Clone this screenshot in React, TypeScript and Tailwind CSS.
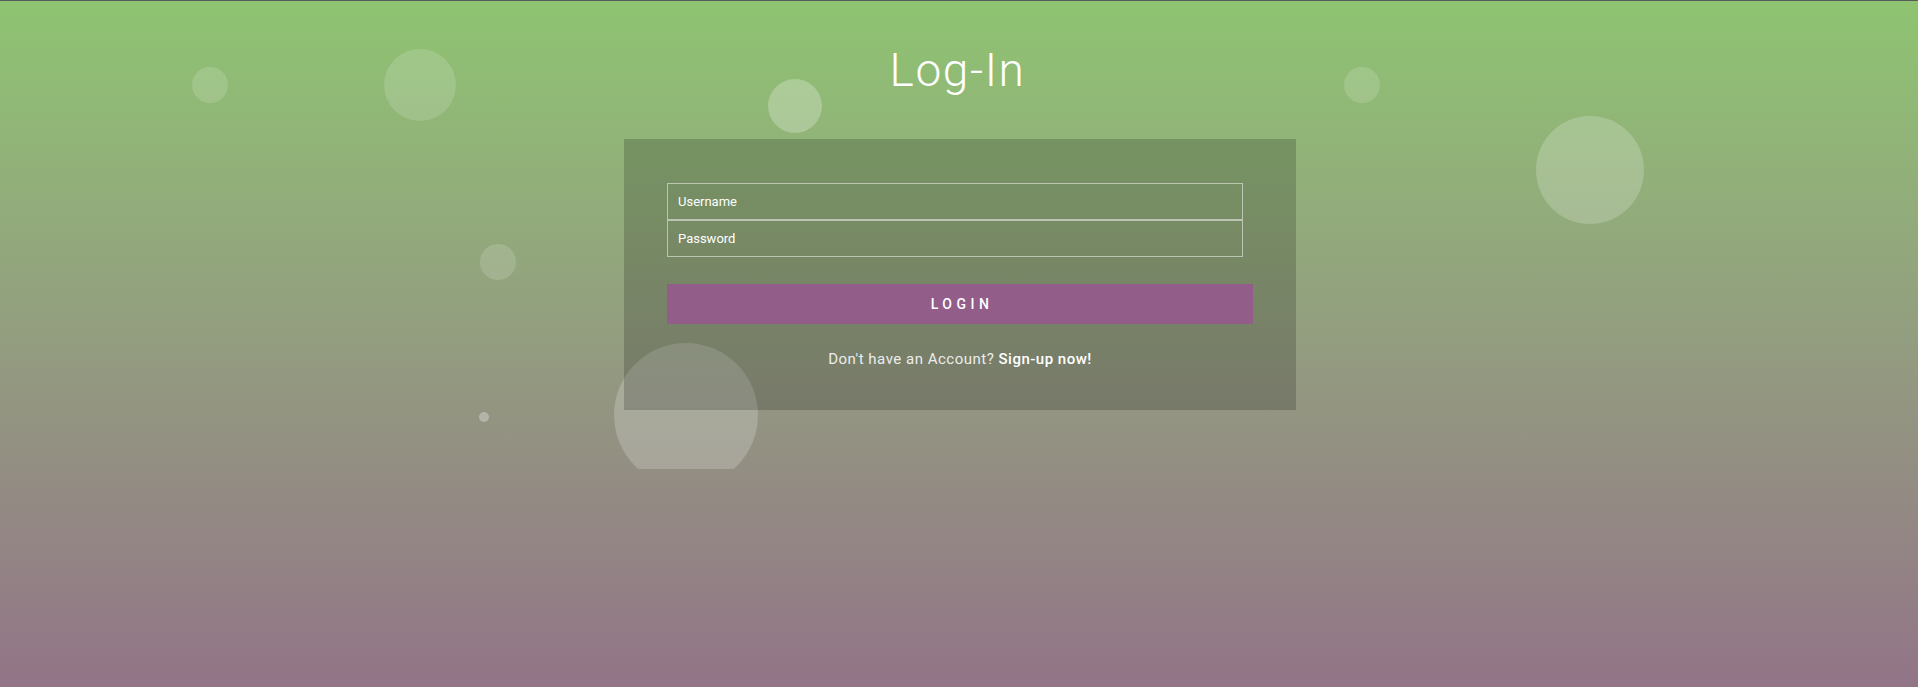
import React from 'react';

const BUBBLES = [
  { x: 210, y: 85, d: 36, cls: 'bg-white/15' },
  { x: 420, y: 85, d: 72, cls: 'bg-white/15' },
  { x: 498, y: 262, d: 36, cls: 'bg-white/15' },
  { x: 484, y: 417, d: 10, cls: 'bg-white/30' },
  { x: 795, y: 106, d: 54, cls: 'bg-white/25' },
  { x: 686, y: 415, d: 144, cls: 'bg-white/20' },
  { x: 1362, y: 85, d: 36, cls: 'bg-white/15' },
  { x: 1590, y: 170, d: 108, cls: 'bg-white/20' },
];

export default function App() {
  return (
    <div
      className="relative min-h-[687px] w-full border-t border-[#5a5a5a] bg-gradient-to-b from-[#8ec471] to-[#927487] font-['Roboto','Liberation_Sans',sans-serif] text-white"
    >
      {/* bubbles */}
      <ul className="pointer-events-none absolute left-0 right-0 top-0 h-[468px] overflow-hidden">
        {BUBBLES.map((b, i) => (
          <li
            key={i}
            className={`absolute list-none rounded-full ${b.cls}`}
            style={{ left: b.x - b.d / 2, top: b.y - b.d / 2 - 1, width: b.d, height: b.d }}
          />
        ))}
      </ul>

      <div className="relative z-10 flex flex-col items-center pt-[46px]">
        <h1 className="mr-[3px] text-[46px] leading-[46px] font-light tracking-[1.6px]">Log-In</h1>

        <form
          className="ml-[2px] mt-[46px] w-[672px] bg-black/[0.18] px-[43px] pt-[44px] pb-[41px]"
          onSubmit={(e) => e.preventDefault()}
        >
          <input
            type="text"
            placeholder="Username"
            className="block h-[37px] w-[576px] border border-white/50 bg-transparent pl-[10px] text-[13px] text-white outline-none placeholder:text-white"
          />
          <input
            type="password"
            placeholder="Password"
            className="block h-[37px] w-[576px] border border-white/50 bg-transparent pl-[10px] text-[13px] text-white outline-none placeholder:text-white"
          />
          <button
            type="submit"
            className="mt-[27px] block h-[40px] w-full bg-[#935d8a] pl-[4px] text-[14px] font-medium tracking-[4.5px] text-white"
          >
            LOGIN
          </button>
          <p className="mt-[25px] text-center text-[15px] leading-[20px] tracking-[0.5px] text-[#ececec]">
            Don't have an Account? <a className="font-medium text-white">Sign-up now!</a>
          </p>
        </form>
      </div>
    </div>
  );
}
